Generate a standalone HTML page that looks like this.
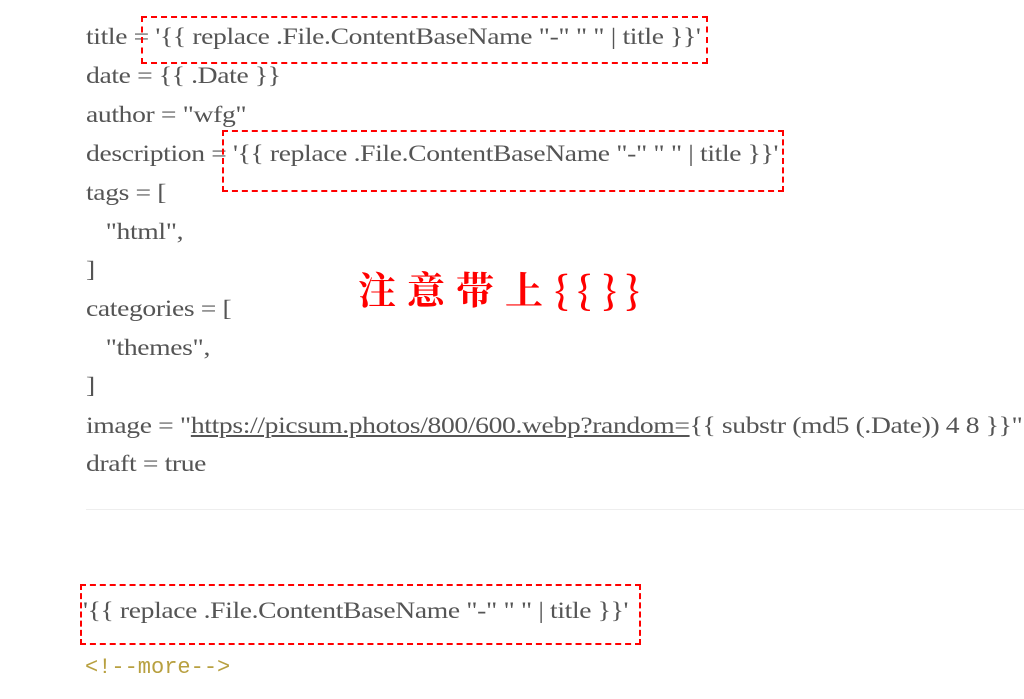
<!DOCTYPE html>
<html><head><meta charset="utf-8"><style>
body{margin:0;background:#fff;width:1024px;height:699px;overflow:hidden;position:relative;font-family:"Liberation Serif",serif;color:#555;}
.l{position:absolute;left:86px;font-size:23px;line-height:26px;white-space:pre;letter-spacing:-0.3px;transform:scaleX(1.2);transform-origin:left;}
.box{position:absolute;border:2px dashed #f00;}
a{color:#555;text-decoration:underline;}
</style></head><body>
<div class="l" style="top:24px">title = '{{ replace .File.ContentBaseName "-" " " | title }}'</div>
<div class="l" style="top:63px">date = {{ .Date }}</div>
<div class="l" style="top:102px">author = "wfg"</div>
<div class="l" style="top:141px">description = '{{ replace .File.ContentBaseName "-" " " | title }}'</div>
<div class="l" style="top:180px">tags = [</div>
<div class="l" style="top:219px">   "html",</div>
<div class="l" style="top:257px">]</div>
<div class="l" style="top:296px">categories = [</div>
<div class="l" style="top:335px">   "themes",</div>
<div class="l" style="top:373px">]</div>
<div class="l" style="top:413px">image = "<a>https://picsum.photos/800/600.webp?random=</a>{{ substr (md5 (.Date)) 4 8 }}"</div>
<div class="l" style="top:451px">draft = true</div>
<div style="position:absolute;left:86px;right:0;top:509px;height:1px;background:#eee"></div>
<div class="l" style="top:598px;left:83px">'{{ replace .File.ContentBaseName "-" " " | title }}'</div>
<div style="position:absolute;left:85px;top:655px;font-family:'Liberation Mono',monospace;font-size:22px;color:#b8a040">&lt;!--more--&gt;</div>
<div class="box" style="left:141px;top:16px;width:563px;height:44px"></div>
<div class="box" style="left:222px;top:130px;width:558px;height:58px"></div>
<div class="box" style="left:80px;top:584px;width:557px;height:57px"></div>
<div style="position:absolute;left:358px;top:260px;font-family:'Noto Serif CJK SC','Noto Sans CJK SC',serif;font-size:38px;font-weight:bold;color:#f00;letter-spacing:11px;white-space:nowrap">注意带上{{}}</div>
</body></html>
